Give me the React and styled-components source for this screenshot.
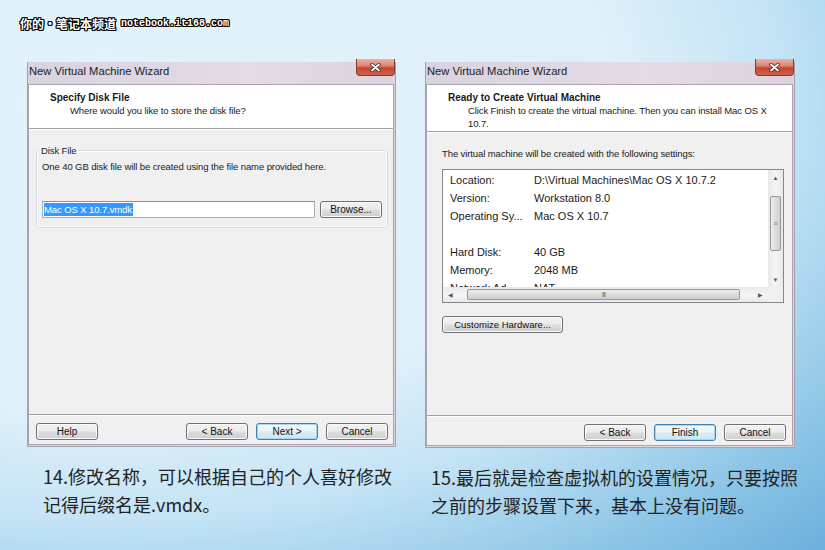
import React from 'react';
import styled, { createGlobalStyle } from 'styled-components';

const Global = createGlobalStyle`
  html, body {
    margin: 0;
    padding: 0;
  }
  body {
    width: 825px;
    height: 550px;
    overflow: hidden;
  }
`;

const Page = styled.div`
  width: 825px;
  height: 550px;
  box-sizing: border-box;
  padding: 16px 0 0 0;
  background:
    radial-gradient(ellipse 130% 120% at 12% 18%, #e2f2fb 0%, #dff0fa 48%, #c3e3f5 64%, #8ec6e7 82%, #63a9da 100%);
  font-family: 'Liberation Sans', Arial, sans-serif;
`;

const SiteMark = styled.div`
  display: flex;
  align-items: center;
  gap: 5px;
  padding-left: 20px;
  height: 14px;
  color: #fff;
  font-weight: bold;
  text-shadow:
    1px 0 0 #000, -1px 0 0 #000, 0 1px 0 #000, 0 -1px 0 #000,
    1px 1px 0 #000, -1px -1px 0 #000, 1px -1px 0 #000, -1px 1px 0 #000;
`;

const SiteName = styled.span`
  font-family: 'Noto Sans CJK SC', sans-serif;
  font-size: 12px;
`;

const SiteUrl = styled.span`
  font-family: 'Liberation Mono', monospace;
  font-size: 10px;
`;

const Columns = styled.div`
  display: grid;
  grid-template-columns: 369px 370px;
  column-gap: 29px;
  padding-left: 27px;
  margin-top: 32px;
`;

const Column = styled.div`
  display: flex;
  flex-direction: column;
`;

const Window = styled.div`
  height: ${p => p.$h}px;
  box-sizing: border-box;
  display: flex;
  flex-direction: column;
  border: 1px solid #a89fad;
  border-top: none;
  padding: 0 1px 1px 0;
  background: linear-gradient(90deg, #d8d3df 0%, #e3dbe6 60%, #ddd2de 100%);
`;

const TitleBar = styled.div`
  height: 22px;
  flex: none;
  display: flex;
  align-items: flex-start;
  padding-left: 1px;
`;

const Title = styled.div`
  flex: 1;
  font-size: 11.2px;
  line-height: 19px;
  color: #1b1b1b;
`;

const CloseButton = styled.div`
  width: 39px;
  height: 17px;
  box-sizing: border-box;
  margin-top: -3px;
  margin-right: -1px;
  border: 1px solid #8a3b2e;
  border-top: none;
  border-radius: 0 0 4px 4px;
  background: linear-gradient(180deg, #eeb0a3 0%, #d9826f 45%, #c44632 55%, #d0624b 100%);
  display: flex;
  align-items: center;
  justify-content: center;
`;

const Body = styled.div`
  flex: 1;
  display: flex;
  flex-direction: column;
  border: 1px solid #aaa2b0;
  background: #f0f0f0;
`;

const Header = styled.div`
  background: #fff;
  border-bottom: 1px solid #a0a0a0;
  box-shadow: 0 1px 0 #fff;
  padding: 6px 0 ${p => p.$pb}px 21px;
  font-size: 9.5px;
  letter-spacing: -0.1px;
  line-height: 13px;
  color: #1a1a1a;
`;

const HeadTitle = styled.div`
  font-weight: bold;
  font-size: 10px;
  letter-spacing: 0;
`;

const HeadSub = styled.div`
  padding-left: 20px;
`;

const Content = styled.div`
  flex: 1;
  display: flex;
  flex-direction: column;
  padding: ${p => p.$pad};
  font-size: 9.5px;
  letter-spacing: -0.1px;
  color: #1a1a1a;
`;

const Group = styled.fieldset`
  margin: 16px 5px 0 7px;
  padding: 4px 5px 9px 5px;
  border: 1px solid #d5dfe5;
  border-radius: 3px;
  box-shadow: inset 0 0 0 1px #fff;
`;

const Legend = styled.legend`
  padding: 0 1px;
  margin-left: -2px;
  font-size: 9.5px;
  color: #1a1a1a;
`;

const GroupText = styled.div`
  line-height: 13px;
`;

const FieldRow = styled.div`
  display: flex;
  align-items: center;
  gap: 5px;
  margin-top: 28px;
`;

const Input = styled.div`
  flex: 1;
  height: 17px;
  box-sizing: border-box;
  border: 1px solid #abadb3;
  border-top-color: #8e9095;
  background: #fff;
  padding: 1px 1px;
  display: flex;
  align-items: center;
`;

const Selected = styled.span`
  background: #3399ff;
  color: #fff;
  line-height: 13px;
  padding: 0 1px 0 0;
`;

const Button = styled.div`
  width: ${p => p.$w || 62}px;
  height: 17px;
  box-sizing: border-box;
  border: 1px solid ${p => (p.$focus ? '#3c7fb1' : '#707070')};
  border-radius: 3px;
  background: ${p =>
    p.$focus
      ? 'linear-gradient(180deg, #f4f9fc 0%, #e9f3f9 48%, #dbebf5 52%, #d2e5f2 100%)'
      : 'linear-gradient(180deg, #f2f2f2 0%, #ebebeb 48%, #dddddd 52%, #cfcfcf 100%)'};
  box-shadow: inset 0 0 0 1px ${p => (p.$focus ? '#a6d8f3' : '#fbfbfb')};
  display: flex;
  align-items: center;
  justify-content: center;
  font-size: ${p => p.$fs || 10}px;
  letter-spacing: 0;
  color: #111;
  flex: none;
`;

const Footer = styled.div`
  flex: none;
  height: 30px;
  box-sizing: border-box;
  border-top: 1px solid #a0a0a0;
  box-shadow: inset 0 1px 0 #fff;
  display: flex;
  align-items: flex-start;
  padding: 8px ${p => p.$pr}px 0 7px;
  gap: 8px;
`;

const Spacer = styled.div`
  flex: 1;
`;

const Intro = styled.div`
  line-height: 13px;
`;

const ListBox = styled.div`
  margin-top: 9px;
  width: 342px;
  height: 134px;
  box-sizing: border-box;
  border: 1px solid #828790;
  background: #fff;
  display: grid;
  grid-template-columns: 1fr 15px;
  grid-template-rows: 1fr 15px;
`;

const ListRows = styled.div`
  overflow: hidden;
  padding: 1px 0 0 7px;
`;

const Row = styled.div`
  display: flex;
  height: 18px;
  align-items: center;
  font-size: 11px;
  letter-spacing: 0;
  color: #1a1a1a;
`;

const Key = styled.span`
  width: 84px;
  white-space: nowrap;
`;

const VScroll = styled.div`
  grid-row: 1;
  grid-column: 2;
  display: flex;
  flex-direction: column;
  align-items: center;
  background: linear-gradient(90deg, #e8e8e8, #f5f5f5 50%, #e8e8e8);
`;

const HScroll = styled.div`
  grid-row: 2;
  grid-column: 1;
  display: flex;
  align-items: center;
  background: linear-gradient(180deg, #e8e8e8, #f5f5f5 50%, #e8e8e8);
`;

const Corner = styled.div`
  grid-row: 2;
  grid-column: 2;
  background: #f0f0f0;
`;

const Arrow = styled.div`
  width: 15px;
  height: 15px;
  display: flex;
  align-items: center;
  justify-content: center;
  font-size: 6px;
  color: #555;
  flex: none;
`;

const VThumb = styled.div`
  width: 11px;
  height: 55px;
  margin-top: 11px;
  box-sizing: border-box;
  border: 1px solid #979797;
  border-radius: 2px;
  background: linear-gradient(90deg, #eeeeee, #dcdcdc 50%, #cfcfcf);
  display: flex;
  align-items: center;
  justify-content: center;
  font-size: 7px;
  color: #777;
`;

const Fill = styled.div`
  flex: 1;
`;

const HThumb = styled.div`
  height: 11px;
  width: 273px;
  margin-left: 9px;
  box-sizing: border-box;
  border: 1px solid #979797;
  border-radius: 2px;
  background: linear-gradient(180deg, #eeeeee, #dcdcdc 50%, #cfcfcf);
  display: flex;
  align-items: center;
  justify-content: center;
  font-size: 7px;
  color: #666;
  letter-spacing: -1px;
`;

const ButtonLine = styled.div`
  margin-top: 13px;
`;

const Caption = styled.div`
  margin-top: 15px;
  padding-left: ${p => p.$indent}px;
  font-family: 'Noto Sans CJK SC', sans-serif;
  font-size: 18px;
  line-height: 28px;
  color: #222;
  white-space: nowrap;
`;

const CloseGlyph = () => (
  <svg width="11" height="9" viewBox="0 0 11 9">
    <path d="M2 1.5 L9 7.5 M9 1.5 L2 7.5" stroke="#4a2a24" strokeWidth="3.4" strokeLinecap="round" />
    <path d="M2 1.5 L9 7.5 M9 1.5 L2 7.5" stroke="#fff" strokeWidth="1.8" strokeLinecap="round" />
  </svg>
);

const settings = [
  ['Location:', 'D:\\Virtual Machines\\Mac OS X 10.7.2'],
  ['Version:', 'Workstation 8.0'],
  ['Operating Sy...', 'Mac OS X 10.7'],
  ['', ''],
  ['Hard Disk:', '40 GB'],
  ['Memory:', '2048 MB'],
  ['Network Ad...', 'NAT'],
];

function WizardFrame({ height, children }) {
  return (
    <Window $h={height}>
      <TitleBar>
        <Title>New Virtual Machine Wizard</Title>
        <CloseButton>
          <CloseGlyph />
        </CloseButton>
      </TitleBar>
      <Body>{children}</Body>
    </Window>
  );
}

export default function App() {
  return (
    <Page>
      <Global />
      <SiteMark>
        <SiteName>你的·笔记本频道</SiteName>
        <SiteUrl>notebook.it168.com</SiteUrl>
      </SiteMark>
      <Columns>
        <Column>
          <WizardFrame height={385}>
            <Header $pb={11}>
              <HeadTitle>Specify Disk File</HeadTitle>
              <HeadSub>Where would you like to store the disk file?</HeadSub>
            </Header>
            <Content $pad="0">
              <Group>
                <Legend>Disk File</Legend>
                <GroupText>One 40 GB disk file will be created using the file name provided here.</GroupText>
                <FieldRow>
                  <Input>
                    <Selected>Mac OS X 10.7.vmdk</Selected>
                  </Input>
                  <Button>Browse...</Button>
                </FieldRow>
              </Group>
            </Content>
            <Footer $pr={5}>
              <Button>Help</Button>
              <Spacer />
              <Button>&lt; Back</Button>
              <Button $focus>Next &gt;</Button>
              <Button>Cancel</Button>
            </Footer>
          </WizardFrame>
          <Caption $indent={16}>
            14.修改名称，可以根据自己的个人喜好修改
            <br />
            记得后缀名是.vmdx。
          </Caption>
        </Column>
        <Column>
          <WizardFrame height={386}>
            <Header $pb={1}>
              <HeadTitle>Ready to Create Virtual Machine</HeadTitle>
              <HeadSub>
                Click Finish to create the virtual machine. Then you can install Mac OS X
                <br />
                10.7.
              </HeadSub>
            </Header>
            <Content $pad="15px 0 0 15px">
              <Intro>The virtual machine will be created with the following settings:</Intro>
              <ListBox>
                <ListRows>
                  {settings.map(([k, v], i) => (
                    <Row key={i}>
                      <Key>{k}</Key>
                      <span>{v}</span>
                    </Row>
                  ))}
                </ListRows>
                <VScroll>
                  <Arrow>▲</Arrow>
                  <VThumb>≡</VThumb>
                  <Fill />
                  <Arrow>▼</Arrow>
                </VScroll>
                <HScroll>
                  <Arrow>◀</Arrow>
                  <HThumb>III</HThumb>
                  <Fill />
                  <Arrow>▶</Arrow>
                </HScroll>
                <Corner />
              </ListBox>
              <ButtonLine>
                <Button $w={121} $fs={9.5}>Customize Hardware...</Button>
              </ButtonLine>
            </Content>
            <Footer $pr={6}>
              <Spacer />
              <Button>&lt; Back</Button>
              <Button $focus>Finish</Button>
              <Button>Cancel</Button>
            </Footer>
          </WizardFrame>
          <Caption $indent={6}>
            15.最后就是检查虚拟机的设置情况，只要按照
            <br />
            之前的步骤设置下来，基本上没有问题。
          </Caption>
        </Column>
      </Columns>
    </Page>
  );
}
